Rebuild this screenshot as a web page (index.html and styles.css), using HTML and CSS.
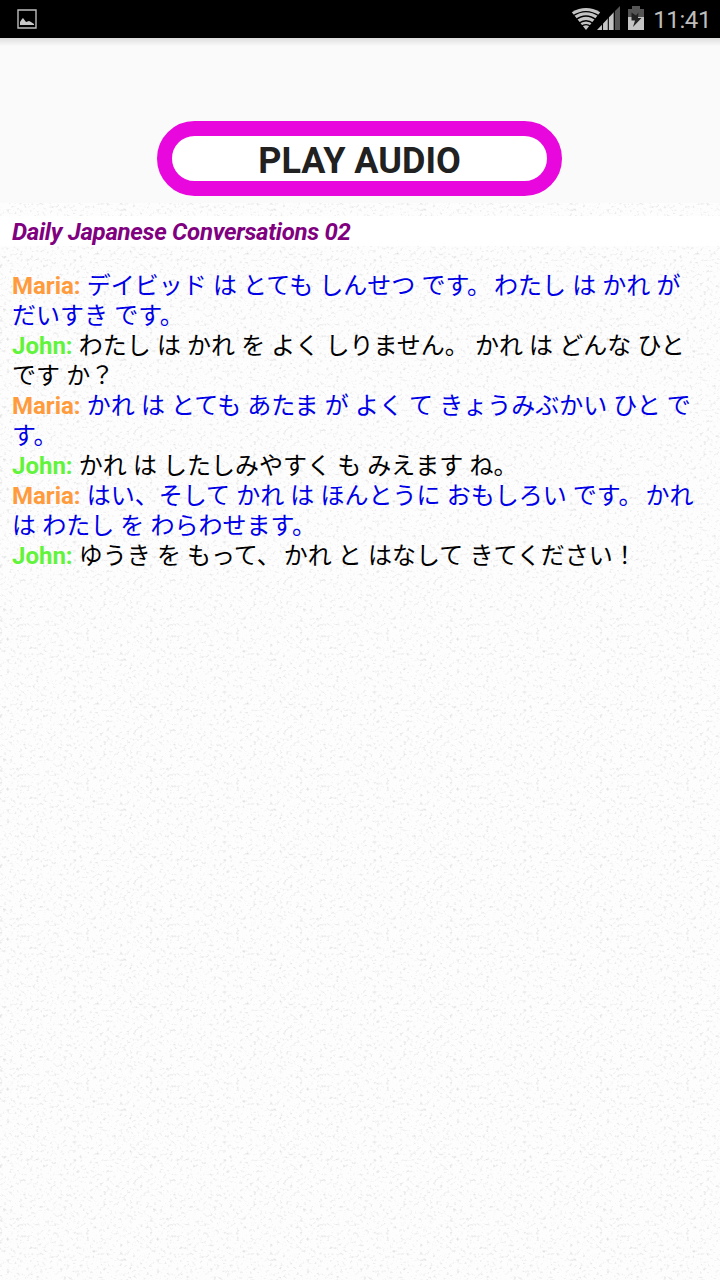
FILE: index.html
```
<!DOCTYPE html>
<html lang="ja">
<head>
<meta charset="utf-8">
<title>Daily Japanese Conversations 02</title>
<link rel="stylesheet" href="styles.css">
</head>
<body>
<header class="status">
  <svg class="picture" width="20" height="20" viewBox="0 0 20 20"><path d="M1 1h18v18H1z" fill="none" stroke="#bdbdbd" stroke-width="1.4"/><path d="M3 16v-3l2-3 1-1 3 4 3-1 2 1 3 2v1z" fill="#c8c8c8"/></svg>
  <div class="indicators">
    <svg class="wifi" width="30" height="22" viewBox="0 0 30 22"><path d="M15 22L.8 4.200Q15-4.200 29.200 4.200z" fill="#c4c4c4"/><path d="M1.800 8Q15-.8 28.200 8M4.500 12Q15 4 25.500 12M7.500 15.500Q15 10 22.500 15.500M10 18.500Q15 14.700 20 18.500" fill="none" stroke="#000" stroke-width="1.300"/></svg>
    <svg class="signal" width="23" height="24" viewBox="0 0 23 24"><path d="M0 24L17 6v18z" fill="#c4c4c4"/><path d="M17.500 5.500L23 0v24h-5.500z" fill="#555"/><path d="M5.500 15v9M11.300 9v15M17.200 3v21" stroke="#000" stroke-width="1.100"/></svg>
    <svg class="battery" width="16" height="24" viewBox="0 0 16 24"><path d="M4 0h8v3h4v8H0V3h4z" fill="#555"/><path d="M0 11h16v13H0z" fill="#c4c4c4"/><path d="M3.500 6.500l4.500 3L10.500 6.500 10 12h3.500L5 21l2-6.500H3.500z" fill="#222"/></svg>
    <span class="clock">11:41</span>
  </div>
</header>
<section class="player"><button class="play">PLAY AUDIO</button></section>
<main class="page">
  <svg class="paper" width="720" height="1077">
    <filter id="grain" filterUnits="userSpaceOnUse" x="0" y="0" width="720" height="1077" color-interpolation-filters="sRGB">
      <feTurbulence type="fractalNoise" baseFrequency=".3 .34" numOctaves="3" seed="21" stitchTiles="stitch" x="0" y="0" width="150" height="150"/>
      <feColorMatrix values="0 0 0 0 .5  0 0 0 0 .5  0 0 0 0 .5  1 0 0 0 -.56" x="0" y="0" width="150" height="150"/>
      <feTile x="0" y="0" width="720" height="1077"/>
    </filter>
    <rect width="720" height="1077" fill="#fdfdfd"/>
    <rect width="720" height="1077" filter="url(#grain)" opacity=".65"/>
  </svg>
  <h1 class="title">Daily Japanese Conversations 02</h1>
  <div class="dialogue">
    <p class="line maria"><b>Maria:</b> デイビッド は とても しんせつ です<span class="stop">。</span>わたし は かれ が<br>だいすき です。</p>
    <p class="line john"><b>John:</b> わたし は かれ を よく しりません。 かれ は どんな ひと<br>です か？</p>
    <p class="line maria"><b>Maria:</b> かれ は とても あたま が よく て きょうみぶかい ひと で<br>す。</p>
    <p class="line john"><b>John:</b> かれ は したしみやすく も みえます ね。</p>
    <p class="line maria"><b>Maria:</b> はい、そして かれ は ほんとうに おもしろい です<span class="stop">。</span>かれ<br>は わたし を わらわせます。</p>
    <p class="line john"><b>John:</b> ゆうき を もって<span class="stop">、</span>かれ と はなして きてください！</p>
  </div>
</main>
</body>
</html>
```
FILE: styles.css
```
* { box-sizing: border-box; }
body {
  margin: 0;
  height: 1280px;
  display: flex;
  flex-direction: column;
  overflow: hidden;
  background: #fafafa;
  font-family: Roboto, "Noto Sans CJK JP", sans-serif;
}
.status {
  height: 38px;
  flex: none;
  display: flex;
  justify-content: space-between;
  padding: 0 9px 0 17px;
  background: #000;
}
.picture { margin-top: 9px; }
.indicators { display: flex; align-items: flex-start; }
.wifi { margin-top: 8px; }
.signal { margin: 6px 0 0 -4px; }
.battery { margin: 6px 0 0 8px; }
.clock { margin-left: 9px; font-size: 24px; line-height: 40px; letter-spacing: -.4px; color: #bdbdbd; }
.player {
  height: 165px;
  flex: none;
  display: flex;
  justify-content: center;
  align-items: flex-start;
  padding: 83px 1px 0 0;
  background: linear-gradient(#dedede, #fafafa 8px);
}
.play {
  width: 405px;
  height: 75px;
  padding: 5px 0 0;
  border: 15px solid #e807dc;
  border-radius: 38px;
  background: #fff;
  color: #212121;
  font: 700 36px/40px Roboto, sans-serif;
}
.page {
  position: relative;
  flex: 1;
  padding-top: 13px;
}
.paper { position: absolute; left: 0; top: 0; z-index: -1; }
.title {
  margin: 0 0 25px;
  height: 30px;
  padding-left: 12px;
  background: #fff;
  color: purple;
  font-size: 24px;
  font-weight: 700;
  font-style: italic;
  line-height: 33px;
  letter-spacing: -.3px;
}
.dialogue { padding: 0 12px; }
.line {
  margin: 0;
  font-size: 24px;
  line-height: 30px;
  word-spacing: .2px;
  white-space: nowrap;
}
.stop { margin-right: 3px; }
.maria { color: #0000e6; }
.maria b { color: #ff9b3d; }
.john { color: #000; }
.john b { color: #62f43c; }
```
